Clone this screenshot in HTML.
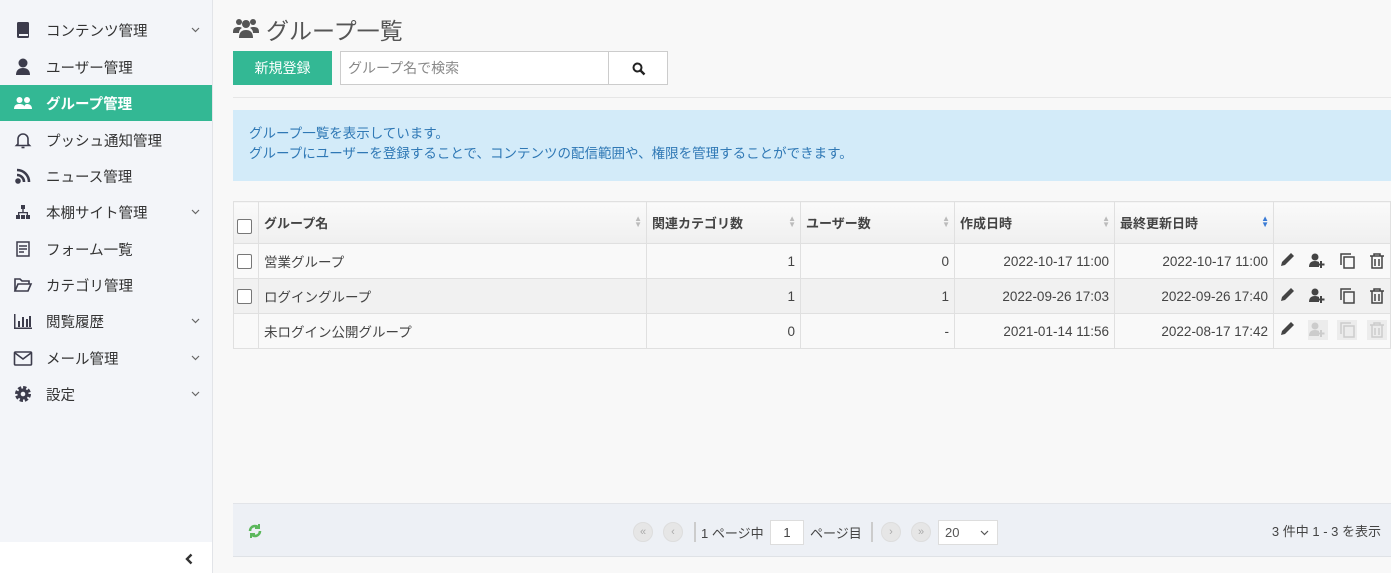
<!DOCTYPE html>
<html><head><meta charset="utf-8"><style>
*{box-sizing:border-box;margin:0;padding:0}
body{width:1391px;height:573px;overflow:hidden;font-family:"Liberation Sans","Noto Sans CJK JP",sans-serif;background:#f8f8f8;color:#333;position:relative}
.sb{position:absolute;left:0;top:0;width:213px;height:573px;background:#f3f5f9;border-right:1px solid #e2e4e8}
.it{position:absolute;left:0;width:212px;height:36px;display:flex;align-items:center;font-size:14.5px;color:#333}
.it .ic{width:46px;display:flex;justify-content:center;padding-left:0}
.it .ic svg{width:20px;height:20px}
.it .cv{position:absolute;right:12px;top:15px;width:9px;height:6px}
.act{background:#33b894;color:#fff;font-weight:bold}
.bot{position:absolute;left:0;top:542px;width:212px;height:31px;background:#fff}
.abs{position:absolute}
table{border-collapse:collapse;position:absolute;left:233px;top:201px;width:1158px;font-size:13.5px;color:#444}
td,th{border:1px solid #e0e0e0;height:35px;padding:0 5px}
th{height:42px;background:linear-gradient(#fafafa,#efefef);text-align:left;font-size:13px;color:#444;position:relative;vertical-align:top;padding-top:11px}
th .s{position:absolute;right:4px;top:14px;font-size:8px;color:#bbb;line-height:6px}
td.r{text-align:right}
tr.g td{background:#f1f1f1}
tr.w td{background:#f9f9f9}
.cb{width:15px;height:15px;border:1px solid #777;border-radius:2px;background:#fff;display:inline-block;vertical-align:middle}
</style></head><body>
<div class="sb">
<div class="it" style="top:12px"><span class="ic"><svg viewBox="0 0 20 20"><rect x="4" y="2" width="12" height="16" rx="1.5" fill="#3c3c4c"/><rect x="6" y="14" width="9" height="2" fill="#f3f5f9"/></svg></span>コンテンツ管理<svg class="cv" viewBox="0 0 9 6"><path d="M1 1l3.5 3.5L8 1" fill="none" stroke="#666" stroke-width="1.2"/></svg></div>
<div class="it" style="top:49px"><span class="ic"><svg viewBox="0 0 20 20"><circle cx="10" cy="6" r="4.5" fill="#3c3c4c"/><path d="M3 18c0-5 3-7 7-7s7 2 7 7z" fill="#3c3c4c"/></svg></span>ユーザー管理</div>
<div class="it act" style="top:85px"><span class="ic"><svg viewBox="0 0 20 20" fill="#fff"><circle cx="6.5" cy="7" r="3"/><circle cx="14" cy="7" r="3"/><path d="M1 16c0-4 2.5-5 5.5-5s5.5 1 5.5 5z"/><path d="M11 16c0-3 1-5 3-5s5 1 5 5z"/></svg></span>グループ管理</div>
<div class="it" style="top:122px"><span class="ic"><svg viewBox="0 0 20 20" fill="none" stroke="#3c3c4c" stroke-width="1.6"><path d="M5 14V9a5 5 0 0110 0v5l1.5 1.5h-13z"/><path d="M8.5 17.5h3"/></svg></span>プッシュ通知管理</div>
<div class="it" style="top:158px"><span class="ic"><svg viewBox="0 0 20 20" fill="none" stroke="#3c3c4c" stroke-width="2.6"><path d="M4 4a12 12 0 0112 12"/><path d="M4 9a7 7 0 017 7"/><circle cx="5" cy="15" r="1.5" fill="#3c3c4c"/></svg></span>ニュース管理</div>
<div class="it" style="top:194px"><span class="ic"><svg viewBox="0 0 20 20" fill="#3c3c4c"><rect x="8" y="3" width="4" height="4"/><rect x="3" y="13" width="4" height="4"/><rect x="8" y="13" width="4" height="4"/><rect x="13" y="13" width="4" height="4"/><path d="M9.3 7h1.4v3H15v3h-1.3v-1.7H6.3V13H5v-3h4.3z"/></svg></span>本棚サイト管理<svg class="cv" viewBox="0 0 9 6"><path d="M1 1l3.5 3.5L8 1" fill="none" stroke="#666" stroke-width="1.2"/></svg></div>
<div class="it" style="top:231px"><span class="ic"><svg viewBox="0 0 20 20" fill="none" stroke="#3c3c4c" stroke-width="1.5"><rect x="4" y="3" width="12" height="14"/><path d="M6 7h8M6 10h8M6 13h5"/></svg></span>フォーム一覧</div>
<div class="it" style="top:267px"><span class="ic"><svg viewBox="0 0 20 20" fill="none" stroke="#3c3c4c" stroke-width="1.6"><path d="M2 16V4h5l2 2h7v3"/><path d="M2 16l3-7h13l-3 7z"/></svg></span>カテゴリ管理</div>
<div class="it" style="top:303px"><span class="ic"><svg viewBox="0 0 20 20" fill="#3c3c4c"><rect x="1" y="3" width="1.5" height="15"/><rect x="1" y="16.5" width="18" height="1.5"/><rect x="5" y="10" width="2" height="6"/><rect x="9" y="6" width="2" height="10"/><rect x="13" y="8" width="2" height="8"/><rect x="16" y="5" width="2" height="11"/></svg></span>閲覧履歴<svg class="cv" viewBox="0 0 9 6"><path d="M1 1l3.5 3.5L8 1" fill="none" stroke="#666" stroke-width="1.2"/></svg></div>
<div class="it" style="top:340px"><span class="ic"><svg viewBox="0 0 20 20" fill="none" stroke="#3c3c4c" stroke-width="1.6"><rect x="1.5" y="4" width="17" height="13" rx="1"/><path d="M2 5l8 6 8-6"/></svg></span>メール管理<svg class="cv" viewBox="0 0 9 6"><path d="M1 1l3.5 3.5L8 1" fill="none" stroke="#666" stroke-width="1.2"/></svg></div>
<div class="it" style="top:376px"><span class="ic"><svg viewBox="0 0 20 20"><circle cx="10" cy="10" r="6" fill="none" stroke="#3c3c4c" stroke-width="4" stroke-dasharray="3 1.7"/><circle cx="10" cy="10" r="5.5" fill="#3c3c4c"/><circle cx="10" cy="10" r="2.3" fill="#f3f5f9"/></svg></span>設定<svg class="cv" viewBox="0 0 9 6"><path d="M1 1l3.5 3.5L8 1" fill="none" stroke="#666" stroke-width="1.2"/></svg></div>
<div class="bot"><svg style="position:absolute;left:184px;top:11px" width="10" height="12" viewBox="0 0 10 12"><path d="M7.5 1.5L3 6l4.5 4.5" fill="none" stroke="#333" stroke-width="2.4"/></svg></div>
</div>

<svg class="abs" style="left:233px;top:17px" width="26" height="22" viewBox="0 0 26 22" fill="#555"><circle cx="6" cy="5" r="3"/><circle cx="20" cy="5" r="3"/><circle cx="13" cy="7" r="4"/><path d="M0 15c0-4 2-5 6-5 2 0 3 1 3 1-2 1-3 3-3 5H0z"/><path d="M26 15c0-4-2-5-6-5-2 0-3 1-3 1 2 1 3 3 3 5h6z"/><path d="M6 21c0-6 3-8 7-8s7 2 7 8z"/></svg>
<div class="abs" style="left:266px;top:12px;font-size:23px;color:#555">グループ一覧</div>
<div class="abs" style="left:233px;top:51px;width:99px;height:34px;background:#33b894;color:#fff;font-size:14px;text-align:center;line-height:34px">新規登録</div>
<div class="abs" style="left:340px;top:51px;width:269px;height:34px;background:#fff;border:1px solid #ccc;font-size:14px;color:#888;padding:0 7px;line-height:32px">グループ名で検索</div>
<div class="abs" style="left:608px;top:51px;width:60px;height:34px;background:#fff;border:1px solid #ccc"><svg style="position:absolute;left:23px;top:10px" width="14" height="14" viewBox="0 0 14 14"><circle cx="5.5" cy="5.5" r="4" fill="none" stroke="#222" stroke-width="2"/><path d="M8.5 8.5l4 4" stroke="#222" stroke-width="2.4"/></svg></div>
<div class="abs" style="left:233px;top:97px;width:1158px;border-top:1px solid #e6e6e6"></div>
<div class="abs" style="left:233px;top:110px;width:1158px;height:71px;background:#d3ebf9;color:#2f78b5;font-size:13.5px;padding:14px 16px;line-height:20px">グループ一覧を表示しています。<br>グループにユーザーを登録することで、コンテンツの配信範囲や、権限を管理することができます。</div>

<table>
<tr><th style="width:25px;padding:0 3px;vertical-align:middle"><span class="cb" style="margin-top:8px"></span></th><th style="width:388px">グループ名<span class="s">▲<br>▼</span></th><th style="width:154px">関連カテゴリ数<span class="s">▲<br>▼</span></th><th style="width:154px">ユーザー数<span class="s">▲<br>▼</span></th><th style="width:160px">作成日時<span class="s">▲<br>▼</span></th><th style="width:159px">最終更新日時<span class="s" style="color:#3a7bd5">▲<br>▼</span></th><th></th></tr>
<tr class="w"><td style="padding:0 3px"><span class="cb"></span></td><td>営業グループ</td><td class="r">1</td><td class="r">0</td><td class="r">2022-10-17 11:00</td><td class="r">2022-10-17 11:00</td><td></td></tr>
<tr class="g"><td style="padding:0 3px"><span class="cb"></span></td><td>ログイングループ</td><td class="r">1</td><td class="r">1</td><td class="r">2022-09-26 17:03</td><td class="r">2022-09-26 17:40</td><td></td></tr>
<tr class="w"><td></td><td>未ログイン公開グループ</td><td class="r">0</td><td class="r">-</td><td class="r">2021-01-14 11:56</td><td class="r">2022-08-17 17:42</td><td></td></tr>
</table>
<div class="abs" style="left:1278px;top:251px">
<svg width="110" height="20" viewBox="0 0 110 20"><g fill="#444"><path d="M3 15l1-4 9-9 3 3-9 9z"/><circle cx="37" cy="6" r="3.5"/><path d="M31 16c0-4 2-6 6-6 2 0 3 .5 4 1v5z"/><path d="M42 10h2v2.5h2.5v2H44V17h-2v-2.5h-2.5v-2H42z"/></g><g fill="none" stroke="#444" stroke-width="1.5"><rect x="66" y="6" width="10" height="11"/><path d="M63 14V3h10"/><path d="M92 5h14M96 5V3h6v2M94 5v12h10V5M97 8v7M101 8v7"/></g></svg></div>
<div class="abs" style="left:1278px;top:286px">
<svg width="110" height="20" viewBox="0 0 110 20"><g fill="#444"><path d="M3 15l1-4 9-9 3 3-9 9z"/><circle cx="37" cy="6" r="3.5"/><path d="M31 16c0-4 2-6 6-6 2 0 3 .5 4 1v5z"/><path d="M42 10h2v2.5h2.5v2H44V17h-2v-2.5h-2.5v-2H42z"/></g><g fill="none" stroke="#444" stroke-width="1.5"><rect x="66" y="6" width="10" height="11"/><path d="M63 14V3h10"/><path d="M92 5h14M96 5V3h6v2M94 5v12h10V5M97 8v7M101 8v7"/></g></svg></div>
<div class="abs" style="left:1278px;top:320px">
<svg width="110" height="20" viewBox="0 0 110 20"><rect x="30" y="0" width="20" height="20" fill="#ececec"/><rect x="59" y="0" width="20" height="20" fill="#ececec"/><rect x="89" y="0" width="20" height="20" fill="#ececec"/><g fill="#444"><path d="M3 15l1-4 9-9 3 3-9 9z"/></g><g fill="#ccc"><circle cx="37" cy="6" r="3.5"/><path d="M31 16c0-4 2-6 6-6 2 0 3 .5 4 1v5z"/><path d="M42 10h2v2.5h2.5v2H44V17h-2v-2.5h-2.5v-2H42z"/></g><g fill="none" stroke="#ccc" stroke-width="1.5"><rect x="66" y="6" width="10" height="11"/><path d="M63 14V3h10"/><path d="M92 5h14M96 5V3h6v2M94 5v12h10V5M97 8v7M101 8v7"/></g></svg></div>

<div class="abs" style="left:233px;top:503px;width:1158px;height:54px;background:#edf0f5;border-top:1px solid #e2e4e8;border-bottom:1px solid #dfe2e6;font-size:13px;color:#444">
<svg style="position:absolute;left:14px;top:19px" width="16" height="16" viewBox="0 0 16 16" fill="none" stroke="#5cb85c" stroke-width="2.6"><path d="M3 8a5 5 0 019-3"/><path d="M13 8a5 5 0 01-9 3"/><path d="M12 1v4H8" stroke-width="2"/><path d="M4 15v-4h4" stroke-width="2"/></svg>
<div class="abs" style="left:400px;top:18px;width:20px;height:20px;border-radius:50%;background:#e6e6e6;border:1px solid #ddd;color:#aaa;font-size:11px;text-align:center;line-height:18px">«</div>
<div class="abs" style="left:430px;top:18px;width:20px;height:20px;border-radius:50%;background:#e6e6e6;border:1px solid #ddd;color:#aaa;font-size:11px;text-align:center;line-height:18px">‹</div>
<div class="abs" style="left:461px;top:18px;height:20px;border-left:2px solid #ccc"></div>
<div class="abs" style="left:468px;top:19px">1 ページ中</div>
<div class="abs" style="left:537px;top:16px;width:34px;height:25px;background:#fff;border:1px solid #ddd;text-align:center;line-height:23px">1</div>
<div class="abs" style="left:577px;top:19px">ページ目</div>
<div class="abs" style="left:638px;top:18px;height:20px;border-left:2px solid #ccc"></div>
<div class="abs" style="left:648px;top:18px;width:20px;height:20px;border-radius:50%;background:#e6e6e6;border:1px solid #ddd;color:#aaa;font-size:11px;text-align:center;line-height:18px">›</div>
<div class="abs" style="left:678px;top:18px;width:20px;height:20px;border-radius:50%;background:#e6e6e6;border:1px solid #ddd;color:#aaa;font-size:11px;text-align:center;line-height:18px">»</div>
<div class="abs" style="left:705px;top:16px;width:60px;height:25px;background:#fff;border:1px solid #ddd;padding-left:6px;line-height:23px;color:#555">20<svg style="position:absolute;right:8px;top:9px" width="9" height="6" viewBox="0 0 9 6"><path d="M1 1l3.5 3.5L8 1" fill="none" stroke="#555" stroke-width="1.2"/></svg></div>
<div class="abs" style="right:10px;top:17px">3 件中 1 - 3 を表示</div>
</div>
</body></html>
